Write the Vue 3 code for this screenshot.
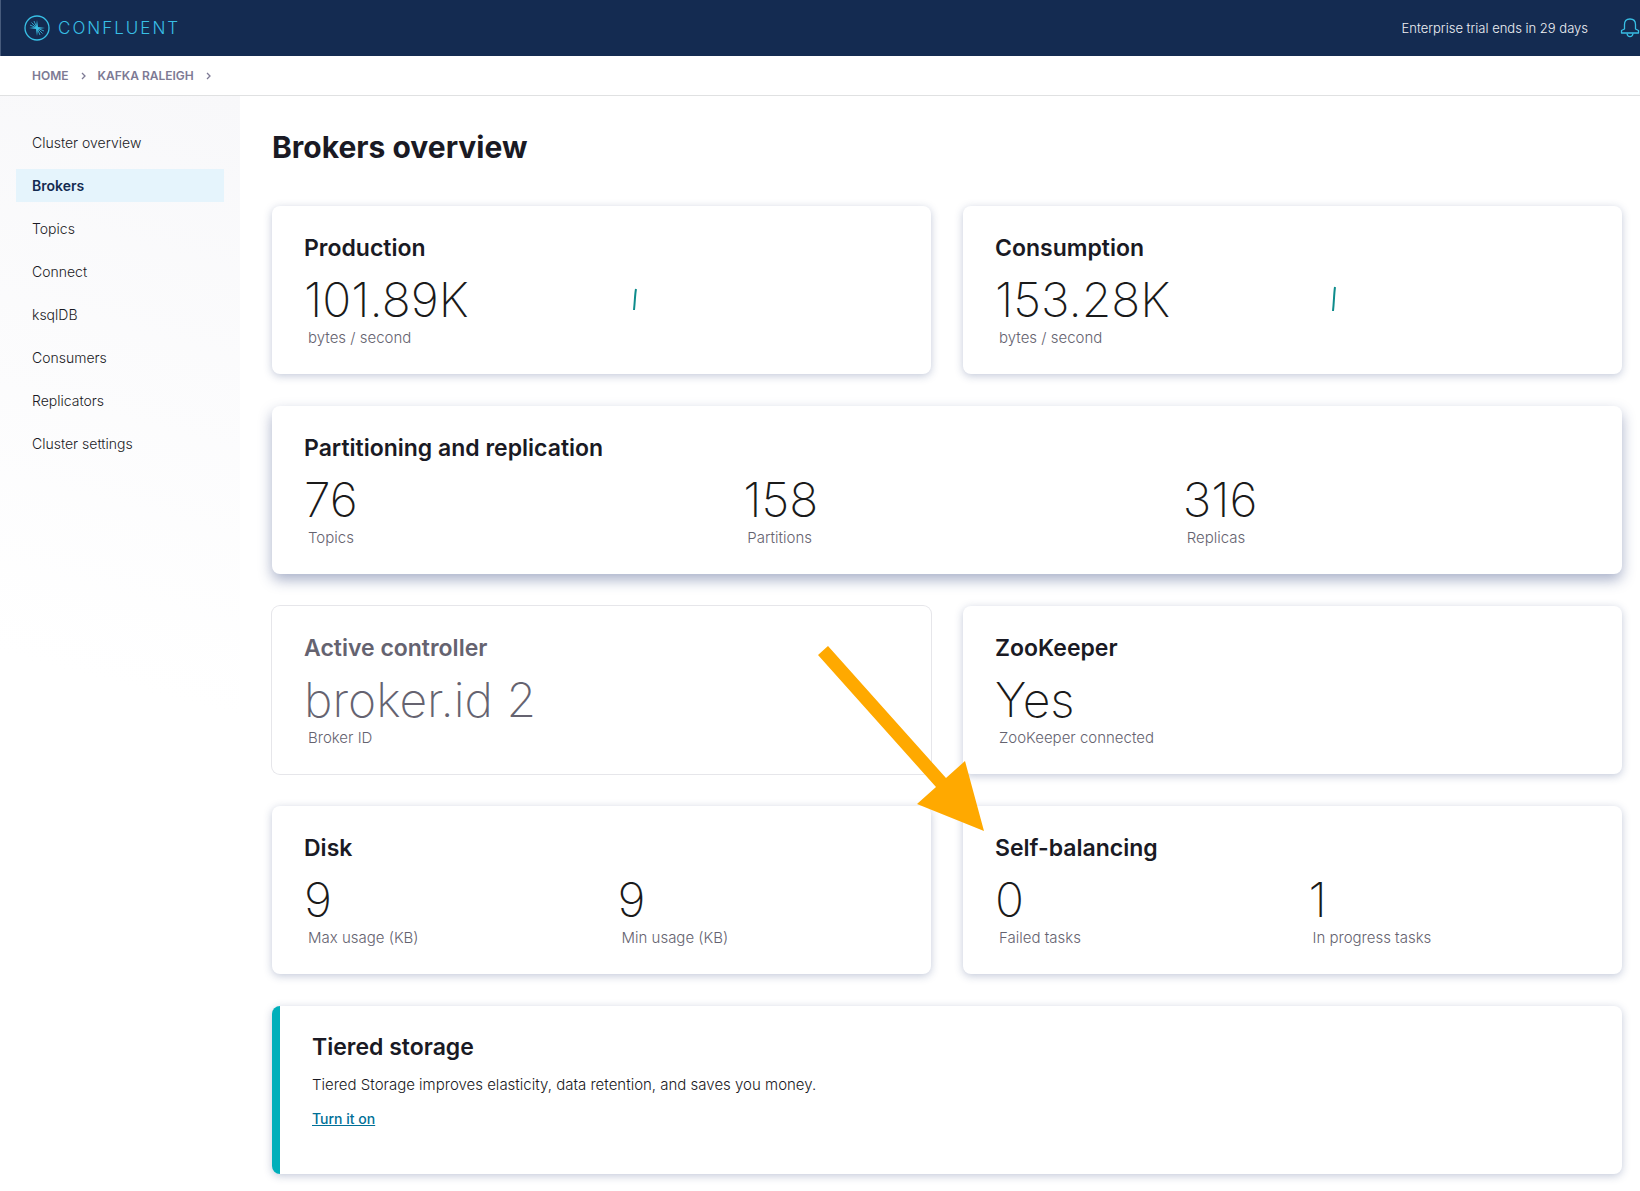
<script setup>
const crumbs = ['Home', 'Kafka Raleigh']

const navItems = [
  'Cluster overview',
  'Brokers',
  'Topics',
  'Connect',
  'ksqlDB',
  'Consumers',
  'Replicators',
  'Cluster settings',
]
const activeItem = 'Brokers'

const cards = [
  {
    title: 'Production',
    stats: [{ value: '101.89K', label: 'bytes / second' }],
    spark: 'M18 9 C17 14 17 20 16 30',
  },
  {
    title: 'Consumption',
    stats: [{ value: '153.28K', label: 'bytes / second' }],
    spark: 'M26 7 C25 14 25 22 24 31',
  },
  {
    title: 'Partitioning and replication',
    variant: 'wide',
    stats: [
      { value: '76', label: 'Topics' },
      { value: '158', label: 'Partitions' },
      { value: '316', label: 'Replicas' },
    ],
  },
  {
    title: 'Active controller',
    variant: 'flat',
    stats: [{ value: 'broker.id 2', label: 'Broker ID' }],
  },
  { title: 'ZooKeeper', stats: [{ value: 'Yes', label: 'ZooKeeper connected' }] },
  {
    title: 'Disk',
    stats: [
      { value: '9', label: 'Max usage (KB)' },
      { value: '9', label: 'Min usage (KB)' },
    ],
  },
  {
    title: 'Self-balancing',
    pointer: true,
    stats: [
      { value: '0', label: 'Failed tasks' },
      { value: '1', label: 'In progress tasks' },
    ],
  },
]
</script>

<template>
  <div class="app">
    <header class="topbar">
      <a class="brand" href="#" aria-label="Confluent">
        <svg class="brand-mark" viewBox="0 0 26 26" fill="none" stroke="currentColor" aria-hidden="true">
          <circle cx="13" cy="13" r="12" stroke-width="1.3" />
          <path
            stroke-width="0.8"
            d="M13 13L10 6M13 13L7.500 7.500M13 13L6 10M13 13L16 20M13 13L18.500 18.500M13 13L20 16"
          />
          <path fill="currentColor" stroke="none" d="M13 5L14 12L21 13L14 14L13 21L12 14L5 13L12 12Z" />
        </svg>
        <span class="brand-name">CONFLUENT</span>
      </a>
      <div class="topbar-right">
        <span class="trial">Enterprise trial ends in 29 days</span>
        <button class="bell" type="button" aria-label="Notifications">
          <svg viewBox="0 0 19 20" fill="none" stroke="currentColor" stroke-width="1.3" aria-hidden="true">
            <path d="M4 11V6.500C4 3 5.500 1 9.500 1S15 3 15 6.500V11L18 12.500V15H1V12.500Z" stroke-linejoin="round" />
            <path d="M6.500 15.500C6.800 17.500 8 18.700 9.500 18.700S12.200 17.500 12.500 15.500" />
          </svg>
        </button>
      </div>
    </header>

    <nav class="crumbs" aria-label="Breadcrumb">
      <template v-for="crumb in crumbs" :key="crumb">
        <a href="#">{{ crumb }}</a>
        <svg viewBox="0 0 5 8" fill="none" stroke="currentColor" aria-hidden="true">
          <path d="M1 1L4 4L1 7" stroke-width="1.300" />
        </svg>
      </template>
    </nav>

    <div class="body">
      <aside class="sidebar">
        <nav aria-label="Cluster">
          <a v-for="item in navItems" :key="item" href="#" :class="{ active: item === activeItem }">{{ item }}</a>
        </nav>
      </aside>

      <main class="main">
        <h1>Brokers overview</h1>
        <div class="grid">
          <section v-for="card in cards" :key="card.title" class="card" :class="card.variant">
            <h2>{{ card.title }}</h2>
            <div class="stats">
              <div v-for="stat in card.stats" :key="stat.label" class="stat">
                <div class="value">{{ stat.value }}</div>
                <div class="label">{{ stat.label }}</div>
              </div>
              <svg v-if="card.spark" class="spark" fill="none" aria-hidden="true">
                <path :d="card.spark" />
              </svg>
            </div>
            <svg v-if="card.pointer" class="pointer" viewBox="0 0 166 186" aria-hidden="true">
              <path d="M0 9L10 0L128 132L147 115L166 185L99 158L118 141Z" />
            </svg>
          </section>

          <section class="card wide promo">
            <h2>Tiered storage</h2>
            <p>Tiered Storage improves elasticity, data retention, and saves you money.</p>
            <a href="#">Turn it on</a>
          </section>
        </div>
      </main>
    </div>
  </div>
</template>

<style>
body {
  margin: 0;
  background: #fff;
}
</style>

<style scoped>
* {
  box-sizing: border-box;
}

.app {
  min-height: 100vh;
  overflow-x: hidden;
  font-family: Inter, "Liberation Sans", sans-serif;
  font-size: 14px;
  color: #1a1a24;
}

.topbar {
  display: flex;
  align-items: center;
  justify-content: space-between;
  height: 56px;
  padding-left: 23px;
  border-left: 1px solid #475b7c;
  background: #142b51;
}

.brand {
  display: flex;
  align-items: center;
  gap: 8px;
  color: #38bfe5;
  text-decoration: none;
}

.brand-mark {
  width: 26px;
  height: 26px;
}

.brand-name {
  font-size: 17px;
  font-weight: 300;
  letter-spacing: 2px;
}

.topbar-right {
  display: flex;
  align-items: center;
  gap: 32px;
}

.trial {
  font-size: 13px;
  font-weight: 300;
  color: #eef0f4;
}

.bell {
  padding: 0;
  border: 0;
  background: none;
  color: #38bfe5;
}

.bell svg {
  display: block;
  width: 20px;
  height: 20px;
}

.crumbs {
  display: flex;
  align-items: center;
  gap: 12px;
  height: 40px;
  padding: 0 32px;
  border-bottom: 1px solid #e0e1e2;
  color: #7d7a94;
}

.crumbs a {
  font-size: 12px;
  font-weight: 600;
  text-transform: uppercase;
  text-decoration: none;
  color: inherit;
}

.crumbs svg {
  width: 5px;
  height: 8px;
}

.body {
  display: flex;
}

.sidebar {
  flex: 0 0 240px;
  padding: 30px 16px;
  background: linear-gradient(195deg, #f8f8fa 0, #fff 600px);
}

.sidebar nav {
  display: flex;
  flex-direction: column;
  gap: 10px;
}

.sidebar a {
  padding: 0 16px;
  line-height: 33px;
  font-weight: 300;
  color: #1a1a24;
  text-decoration: none;
}

.sidebar a.active {
  background: #e5f4fc;
  font-weight: 600;
  color: #142b51;
}

.main {
  flex: 1;
  min-width: 0;
  padding: 32px 18px 16px 32px;
}

h1 {
  margin: 0 0 40px;
  font-size: 30px;
  line-height: 38px;
  font-weight: 700;
}

.grid {
  display: grid;
  grid-template-columns: repeat(2, minmax(0, 1fr));
  gap: 32px;
}

.card {
  position: relative;
  padding: 28px 32px 26px;
  border-radius: 8px;
  background: #fff;
  box-shadow: 0 2px 8px rgba(40, 60, 120, 0.28);
}

.wide {
  grid-column: 1 / -1;
  box-shadow: 0 6px 14px rgba(40, 60, 120, 0.4);
}

.flat {
  box-shadow: 0 0 0 1px #e6e6ea;
}

.flat h2,
.flat .value {
  color: #656370;
}

h2 {
  margin: 0;
  font-size: 23px;
  line-height: 28px;
  font-weight: 600;
}

.stats {
  display: grid;
  grid-template-columns: repeat(2, minmax(0, 1fr));
  column-gap: 32px;
  margin-top: 10px;
}

.wide .stats {
  grid-template-columns: repeat(3, minmax(0, 1fr));
}

.value {
  font-size: 48px;
  line-height: 56px;
  font-weight: 200;
  color: #1a1a1a;
  white-space: nowrap;
}

.label {
  padding-left: 4px;
  font-size: 15px;
  line-height: 20px;
  font-weight: 300;
  color: #656370;
}

.spark {
  align-self: start;
  width: 100%;
  height: 38px;
  margin-top: 8px;
}

.spark path {
  stroke: #0e8c8c;
  stroke-width: 2;
}

.pointer {
  position: absolute;
  z-index: 1;
  top: -160px;
  left: -145px;
  width: 166px;
  height: 186px;
  fill: #ffa900;
}

.promo {
  padding-top: 27px;
  padding-bottom: 43px;
  border-left: 8px solid #00afba;
  box-shadow: 0 2px 8px rgba(40, 60, 120, 0.28);
}

.promo p {
  margin: 12px 0 10px;
  font-size: 15px;
  line-height: 24px;
  font-weight: 300;
}

.promo a {
  line-height: 24px;
  font-weight: 500;
  color: #006f97;
}
</style>
